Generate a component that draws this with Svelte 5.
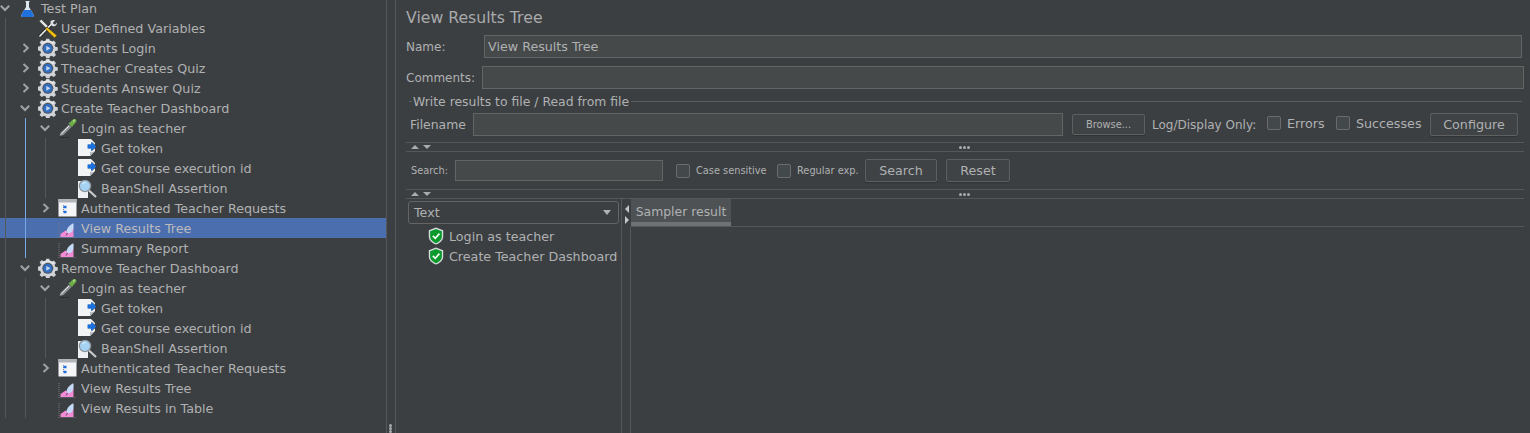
<script>
  // flat tree: depth, guide colours come from the selected path
  const rows = [
    { label: 'Test Plan', depth: 0, icon: 'flask', toggle: 'open' },
    { label: 'User Defined Variables', depth: 1, icon: 'tools' },
    { label: 'Students Login', depth: 1, icon: 'gear', toggle: 'closed' },
    { label: 'Theacher Creates Quiz', depth: 1, icon: 'gear', toggle: 'closed' },
    { label: 'Students Answer Quiz', depth: 1, icon: 'gear', toggle: 'closed' },
    { label: 'Create Teacher Dashboard', depth: 1, icon: 'gear', toggle: 'open' },
    { label: 'Login as teacher', depth: 2, icon: 'dropper', toggle: 'open', path: true },
    { label: 'Get token', depth: 3, icon: 'page', path: true },
    { label: 'Get course execution id', depth: 3, icon: 'page', path: true },
    { label: 'BeanShell Assertion', depth: 3, icon: 'lens', path: true },
    { label: 'Authenticated Teacher Requests', depth: 2, icon: 'window', toggle: 'closed', path: true },
    { label: 'View Results Tree', depth: 2, icon: 'chart', path: true, selected: true },
    { label: 'Summary Report', depth: 2, icon: 'chart', path: true },
    { label: 'Remove Teacher Dashboard', depth: 1, icon: 'gear', toggle: 'open' },
    { label: 'Login as teacher', depth: 2, icon: 'dropper', toggle: 'open' },
    { label: 'Get token', depth: 3, icon: 'page' },
    { label: 'Get course execution id', depth: 3, icon: 'page' },
    { label: 'BeanShell Assertion', depth: 3, icon: 'lens' },
    { label: 'Authenticated Teacher Requests', depth: 2, icon: 'window', toggle: 'closed' },
    { label: 'View Results Tree', depth: 2, icon: 'chart' },
    { label: 'View Results in Table', depth: 2, icon: 'chart' }
  ];

  const results = ['Login as teacher', 'Create Teacher Dashboard'];
</script>

{#snippet icon(kind)}
  <svg class="icon" viewBox="0 0 20 20" aria-hidden="true">
    {#if kind === 'flask'}
      <path d="M7.500 3h4v1h-.5v5l4.500 7.500c.7 1.400 0 2.500-1.300 2.500H4.800c-1.300 0-2-1.100-1.300-2.500L8 9V4h-.5z" fill="#dfe6ee" />
      <path d="M6.200 12h6.600l2.700 4.500c.7 1.400 0 2.500-1.300 2.500H4.800c-1.300 0-2-1.100-1.300-2.500z" fill="#1f6fdc" />
    {:else if kind === 'tools'}
      <path d="M1.500 18.500 14 5.500" stroke="#111" stroke-width="3" />
      <path d="M1.500 18.500 14 5.500" stroke="#eeeeee" stroke-width="1.800" />
      <path d="M13 2.800c1.400-1.100 3-1 4-.4l-2 2 .5 1.600 1.700.4 1.500-1.800c.4 1.600-.3 3.100-2 3.600-1.500.4-3-.2-3.700-1.400-.6-1.300-.9-3 0-4z" fill="#dcdee1" />
      <path d="M1 3 3.500 1.500l6.500 6.500L8 10 2 4z" fill="#e2e2e2" stroke="#222" stroke-width=".4" />
      <path d="M9 9 19 17.500 16.500 20 7.400 11z" fill="#f4bf10" stroke="#222" stroke-width=".5" />
    {:else if kind === 'gear'}
      <path d="M8.200 .8h3.200l.5 2.500 1.700.7 2.200-1.400 2.200 2.300-1.400 2.100.7 1.700 2.500.6v3.200l-2.500.5-.7 1.700 1.400 2.200-2.200 2.200-2.200-1.400-1.700.7-.5 2.500H8.200l-.5-2.500-1.700-.7-2.200 1.400-2.200-2.200 1.400-2.200-.7-1.700-2.500-.5V8.700l2.500-.6.700-1.700-1.400-2.100 2.200-2.300L6 3.400l1.700-.7z" fill="#cfd2d6" />
      <path d="M4.200 5.500a7.500 7.500 0 0 1 11.400 0" stroke="#f2f3f4" stroke-width="1.200" fill="none" />
      <circle cx="9.800" cy="10.300" r="5.500" fill="#4a5464" />
      <circle cx="9.800" cy="10.300" r="4.400" fill="#2f6fc4" />
      <path d="M8.300 7.900 12.500 10.300 8.300 12.700z" fill="#c8daf0" />
    {:else if kind === 'dropper'}
      <path d="M1.500 18 2.800 14.500 11 6.500l2.500 2.500-8 8z" fill="#8d9094" />
      <path d="M2.800 16.500 11 8" stroke="#eceef0" stroke-width="1" />
      <path d="M10.500 5.500 15 1.500c1-.8 2.300-.8 3 0 .8.900.6 2-.3 2.900L14 9z" fill="#6cab47" />
      <path d="M15 2c1-.6 2-.5 2.500.1L15 5z" fill="#a6da80" />
      <path d="M2 19.500h9" stroke="#2b2d2f" stroke-width="1" />
    {:else if kind === 'page'}
      <path d="M0 1h13l4 4v8l-5 5H0z" fill="#f2f3f5" />
      <path d="M17 13l-5 5v-4c2 .4 3.800-.2 5-1z" fill="#b6b9c0" />
      <path d="M10 6.500h3.500V3.500L19.500 8.500 13.500 13.500V10.500H10z" fill="#23272c" opacity=".55" />
      <path d="M9.500 6.500H13V4l5.500 4.500L13 13v-2.500H9.500z" fill="#1a70dd" />
    {:else if kind === 'lens'}
      <path d="M0 3h10v17H0z" fill="#eef0f3" />
      <circle cx="7" cy="8" r="5.600" fill="#a5d3f3" stroke="#90959c" stroke-width="1.300" />
      <path d="M4.500 6c.8-1.200 2-1.500 3-1.300" stroke="#eef8ff" stroke-width="1" fill="none" />
      <path d="M11 12.500 18 19" stroke="#c8cace" stroke-width="2.200" />
    {:else if kind === 'window'}
      <rect x="0.500" y="1" width="18" height="17.500" fill="#f4f5f6" />
      <rect x="0.500" y="1" width="18" height="3.500" fill="#b2b5b9" />
      <path d="M5.500 7v8" stroke="#7d8c9f" stroke-width="1" stroke-dasharray="1 1" />
      <path d="M5.500 9h3M5.500 14h3" stroke="#1f6fdc" stroke-width="2.500" />
    {:else if kind === 'chart'}
      <path d="M1 5v15" stroke="#777a7d" stroke-width="1" stroke-dasharray="1 1" />
      <path d="M2.500 19v-3L7.500 12.500l3 1.500L15.500 10v9z" fill="#f28ad6" />
      <path d="M8.500 14c0-3.500 2.700-7 6.800-8.800.7 3.200.4 7.300-2.300 9.300-1.700 1-3.800.8-4.500-.5z" fill="#c3d9f6" />
      <path d="M9.500 15 8 17.500" stroke="#3a3d40" stroke-width=".8" />
      <path d="M2.500 19.600h15" stroke="#777a7d" stroke-width="1" stroke-dasharray="1 1" />
    {:else if kind === 'shield'}
      <path d="M10 .5 18 3.500v7c0 4.500-3.500 7-8 9-4.500-2-8-4.500-8-9v-7z" fill="#d8dcdf" />
      <path d="M10 2.200 16.500 4.600v5.900c0 3.700-2.900 5.900-6.500 7.500-3.600-1.600-6.500-3.800-6.500-7.500V4.600z" fill="#0a9a2c" />
      <path d="M6.500 9.800 9.200 12.500 13.800 7.300" stroke="#f3fff5" stroke-width="1.900" fill="none" />
    {/if}
  </svg>
{/snippet}

{#snippet splitter()}
  <div class="hsplit">
    <span class="tri up"></span>
    <span class="tri down"></span>
    <span class="dots"><i></i><i></i><i></i></span>
  </div>
{/snippet}

<div class="app">
  <div class="tree-panel">
    <div class="tree">
      {#each rows as row}
        <div class="row" class:selected={row.selected}>
          {#each Array(row.depth) as _, i}
            <span class="guide" class:path={row.path && i === 1}></span>
          {/each}
          <span class="toggle">
            {#if row.toggle === 'open'}
              <svg viewBox="0 0 10 10"><path d="M.8 2.800 5 7 9.200 2.800" /></svg>
            {:else if row.toggle === 'closed'}
              <svg viewBox="0 0 10 10"><path d="M3.500 1 7.800 5 3.500 9" /></svg>
            {/if}
          </span>
          {@render icon(row.icon)}
          <span class="label">{row.label}</span>
        </div>
      {/each}
    </div>
  </div>

  <div class="vsplit"><span class="dots column"><i></i><i></i><i></i></span></div>

  <main class="content">
    <h1>View Results Tree</h1>

    <div class="field name">
      <label for="name">Name:</label>
      <input id="name" value="View Results Tree" />
    </div>
    <div class="field comments">
      <label for="comments">Comments:</label>
      <input id="comments" />
    </div>

    <div class="legend"><i></i><span>Write results to file / Read from file</span><b></b></div>
    <div class="file-row">
      <label for="filename">Filename</label>
      <input id="filename" />
      <button class="browse">Browse...</button>
      <span class="log-label">Log/Display Only:</span>
      <label class="check errors"><input type="checkbox" />Errors</label>
      <label class="check successes"><input type="checkbox" />Successes</label>
      <button class="configure">Configure</button>
    </div>

    {@render splitter()}

    <div class="search-row">
      <label class="small" for="search">Search:</label>
      <input id="search" />
      <label class="check small case"><input type="checkbox" />Case sensitive</label>
      <label class="check small regex"><input type="checkbox" />Regular exp.</label>
      <button class="search-btn">Search</button>
      <button class="reset-btn">Reset</button>
    </div>

    {@render splitter()}

    <div class="results">
      <div class="results-left">
        <div class="combo">
          <span>Text</span>
          <svg viewBox="0 0 8 5"><path d="M0 0h8L4 5z" /></svg>
        </div>
        {#each results as item}
          <div class="result">
            {@render icon('shield')}
            <span>{item}</span>
          </div>
        {/each}
      </div>
      <div class="results-split">
        <span class="tri left"></span>
        <span class="tri right"></span>
      </div>
      <div class="results-right">
        <div class="tabs"><div class="tab">Sampler result</div></div>
        <div class="tab-body"></div>
      </div>
    </div>
  </main>
</div>

<style>
  :global(body) {
    background: #3c3f41;
  }

  .app {
    display: flex;
    height: 433px;
    overflow: hidden;
    background: #3c3f41;
    color: #afb1b3;
    font-family: 'DejaVu Sans', sans-serif;
    font-size: 12.7px;
  }

  /* left tree */
  .tree-panel {
    width: 386px;
    flex: none;
    border-right: 1px solid #555759;
    overflow: hidden;
  }
  .tree {
    margin-top: -2px;
  }
  .row {
    display: flex;
    align-items: center;
    height: 20px;
    padding-left: 5px;
    white-space: nowrap;
  }
  .row.selected {
    background: #4b6eaf;
    color: #bbbbbb;
  }
  .guide {
    flex: none;
    width: 20px;
    height: 20px;
    box-sizing: border-box;
    border-left: 1px solid #555759;
  }
  .guide.path {
    border-left-color: #75a8e6;
  }
  .toggle {
    flex: none;
    width: 20px;
    height: 20px;
    margin-left: -10px;
    margin-right: 3px;
    display: flex;
    align-items: center;
    justify-content: center;
  }
  .toggle svg {
    width: 10px;
    height: 10px;
  }
  .toggle path {
    fill: none;
    stroke: #a0a2a4;
    stroke-width: 2;
  }
  .icon {
    flex: none;
    width: 20px;
    height: 20px;
    margin-right: 3px;
  }

  .vsplit {
    flex: none;
    width: 8px;
    border-right: 1px solid #555759;
    position: relative;
  }
  .dots {
    display: flex;
    gap: 1px;
  }
  .dots i {
    width: 3px;
    height: 3px;
    border-radius: 50%;
    background: #a9abad;
  }
  .dots.column {
    flex-direction: column;
    gap: 0;
    position: absolute;
    left: 2px;
    top: 424px;
  }

  /* right side */
  .content {
    flex: 1;
    min-width: 0;
    padding: 0 6px 0 10px;
    display: flex;
    flex-direction: column;
  }
  h1 {
    margin: 0;
    height: 35px;
    line-height: 36px;
    font-size: 15.7px;
    font-weight: 400;
    color: #a8aaac;
  }
  input:not([type='checkbox']) {
    box-sizing: border-box;
    height: 23px;
    padding: 0 3px;
    background: #45494a;
    border: 1px solid #646464;
    color: #afb1b3;
    font: inherit;
    outline: none;
    min-width: 0;
  }
  .field {
    display: flex;
    align-items: center;
    height: 23px;
  }
  .field label {
    font-size: 12px;
  }
  .field input {
    flex: 1;
  }
  .name {
    margin-right: 2px;
  }
  .name label {
    width: 78px;
  }
  .comments {
    margin-top: 8px;
  }
  .comments label {
    width: 76px;
  }

  .legend {
    display: flex;
    align-items: center;
    height: 16px;
    margin: 4px 2px 0 3px;
    white-space: nowrap;
    font-size: 12.4px;
  }
  .legend i {
    width: 3px;
    height: 1px;
    background: #5b5d5f;
    margin-right: 1px;
  }
  .legend b {
    flex: 1;
    height: 1px;
    background: #5b5d5f;
    margin-left: 2px;
  }

  .file-row {
    display: flex;
    align-items: center;
    height: 23px;
    margin: 4px 0 6px;
    padding-left: 4px;
    white-space: nowrap;
  }
  .file-row label:first-child {
    width: 63px;
    font-size: 12.4px;
  }
  .file-row #filename {
    width: 590px;
  }
  button {
    box-sizing: border-box;
    padding: 0;
    height: 23px;
    background: #3f4345;
    border: 1px solid #5e6060;
    border-radius: 2px;
    box-shadow: 0 1px 1px rgba(0, 0, 0, 0.2);
    color: #afb1b3;
    font: inherit;
  }
  .browse {
    width: 73px;
    height: 21px;
    margin-left: 9px;
    font-size: 9.8px;
  }
  .log-label {
    margin-left: 7px;
    width: 115px;
    font-size: 12px;
  }
  .check {
    display: flex;
    align-items: center;
    gap: 6px;
    white-space: nowrap;
  }
  .file-row .check {
    margin-bottom: 3px;
  }
  .check input {
    appearance: none;
    box-sizing: border-box;
    width: 14px;
    height: 14px;
    margin: 0;
    background: #43494a;
    border: 1px solid #6b6b6b;
    border-radius: 2px;
  }
  .check.errors {
    width: 58px;
  }
  .check.successes {
    margin-left: 11px;
    width: 87px;
  }
  .configure {
    width: 88px;
    margin-left: 7px;
  }

  .hsplit {
    box-sizing: border-box;
    height: 10px;
    flex: none;
    border-top: 1px solid #555759;
    border-bottom: 1px solid #555759;
    display: flex;
    align-items: center;
    padding-left: 5px;
    gap: 4px;
  }
  .hsplit .dots {
    margin-left: 524px;
  }
  .tri {
    width: 0;
    height: 0;
    border-style: solid;
    border-color: transparent;
  }
  .tri.up {
    border-width: 0 4px 4px;
    border-bottom-color: #a9abad;
  }
  .tri.down {
    border-width: 4px 4px 0;
    border-top-color: #a9abad;
  }
  .tri.left {
    border-width: 4px 4px 4px 0;
    border-right-color: #c4c6c8;
  }
  .tri.right {
    border-width: 4px 0 4px 4px;
    border-left-color: #c4c6c8;
  }

  .search-row {
    display: flex;
    align-items: center;
    height: 37px;
    flex: none;
    padding-left: 5px;
    white-space: nowrap;
  }
  .small {
    font-size: 9.8px;
    width: 44px;
  }
  .search-row #search {
    width: 208px;
    height: 21px;
  }
  .small.case {
    margin-left: 13px;
    width: 92px;
  }
  .small.regex {
    width: 88px;
    margin-left: 9px;
  }
  .search-btn {
    width: 72px;
  }
  .reset-btn {
    width: 64px;
    margin-left: 9px;
  }

  .results {
    flex: 1;
    min-height: 0;
    display: flex;
  }
  .results-left {
    box-sizing: border-box;
    width: 216px;
    flex: none;
    padding: 2px 2px 0;
    border-right: 1px solid #555759;
  }
  .combo {
    display: flex;
    align-items: center;
    justify-content: space-between;
    box-sizing: border-box;
    height: 23px;
    padding: 0 7px 0 5px;
    border: 1px solid #646464;
    border-radius: 3px;
    margin-bottom: 2px;
  }
  .combo svg {
    width: 8px;
    height: 5px;
    fill: #afb1b3;
  }
  .result {
    display: flex;
    align-items: center;
    height: 20px;
    padding-left: 19px;
    white-space: nowrap;
    gap: 4px;
  }
  .result .icon {
    width: 18px;
    height: 18px;
    margin: 0;
  }
  .results-split {
    box-sizing: border-box;
    width: 9px;
    flex: none;
    display: flex;
    flex-direction: column;
    align-items: center;
    gap: 3px;
    padding-top: 6px;
  }
  .results-right {
    flex: 1;
    min-width: 0;
    display: flex;
    flex-direction: column;
  }
  .tabs {
    display: flex;
    flex: none;
    border-bottom: 1px solid #555759;
  }
  .tab {
    box-sizing: border-box;
    width: 100px;
    height: 27px;
    line-height: 26px;
    text-align: center;
    font-size: 12.4px;
    background: linear-gradient(#4e5254 23px, #6f7275 23px);
  }
  .tab-body {
    flex: 1;
    margin-left: -1px;
    border-left: 1px solid #555759;
  }
</style>
